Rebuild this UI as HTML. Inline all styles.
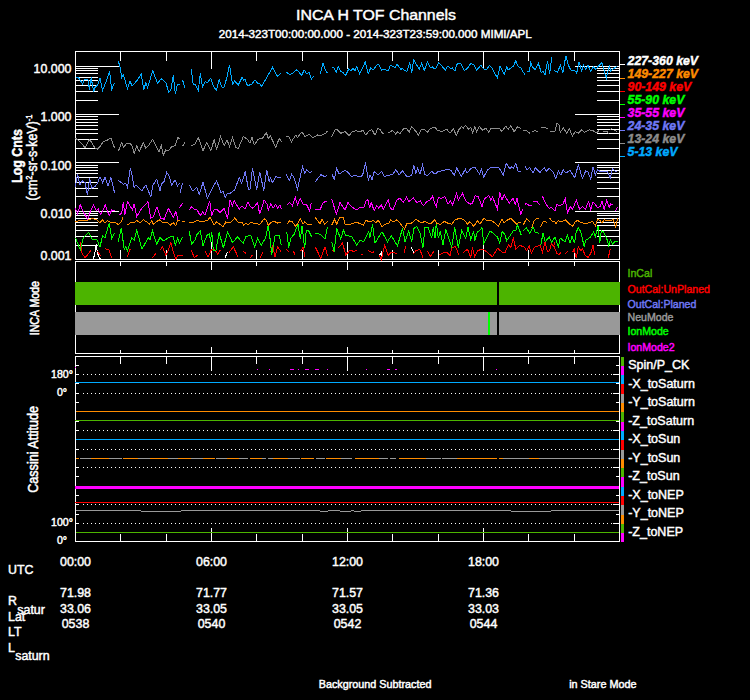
<!DOCTYPE html>
<html><head><meta charset="utf-8"><title>INCA H TOF Channels</title>
<style>html,body{margin:0;padding:0;background:#000;}svg{display:block}text{font-family:"Liberation Sans",Arial,Helvetica,sans-serif;fill:#fff;stroke:#fff;stroke-width:0.45px}</style></head><body>
<svg width="750" height="700" viewBox="0 0 750 700">
<rect x="0" y="0" width="750" height="700" fill="#000"/>
<g shape-rendering="crispEdges">
<rect x="75" y="51" width="545" height="1" fill="#fff"/>
<rect x="75" y="259" width="545" height="1" fill="#fff"/>
<rect x="75" y="51" width="1" height="209" fill="#fff"/>
<rect x="619" y="51" width="1" height="209" fill="#fff"/>
<rect x="75" y="66" width="44" height="1" fill="#fff"/>
<rect x="575" y="66" width="45" height="1" fill="#fff"/>
<rect x="75" y="51" width="23" height="1" fill="#fff"/>
<rect x="597" y="51" width="23" height="1" fill="#fff"/>
<rect x="75" y="114" width="44" height="1" fill="#fff"/>
<rect x="575" y="114" width="45" height="1" fill="#fff"/>
<rect x="75" y="100" width="23" height="1" fill="#fff"/>
<rect x="597" y="100" width="23" height="1" fill="#fff"/>
<rect x="75" y="91" width="23" height="1" fill="#fff"/>
<rect x="597" y="91" width="23" height="1" fill="#fff"/>
<rect x="75" y="85" width="23" height="1" fill="#fff"/>
<rect x="597" y="85" width="23" height="1" fill="#fff"/>
<rect x="75" y="80" width="23" height="1" fill="#fff"/>
<rect x="597" y="80" width="23" height="1" fill="#fff"/>
<rect x="75" y="77" width="23" height="1" fill="#fff"/>
<rect x="597" y="77" width="23" height="1" fill="#fff"/>
<rect x="75" y="73" width="23" height="1" fill="#fff"/>
<rect x="597" y="73" width="23" height="1" fill="#fff"/>
<rect x="75" y="70" width="23" height="1" fill="#fff"/>
<rect x="597" y="70" width="23" height="1" fill="#fff"/>
<rect x="75" y="68" width="23" height="1" fill="#fff"/>
<rect x="597" y="68" width="23" height="1" fill="#fff"/>
<rect x="75" y="162" width="44" height="1" fill="#fff"/>
<rect x="575" y="162" width="45" height="1" fill="#fff"/>
<rect x="75" y="148" width="23" height="1" fill="#fff"/>
<rect x="597" y="148" width="23" height="1" fill="#fff"/>
<rect x="75" y="139" width="23" height="1" fill="#fff"/>
<rect x="597" y="139" width="23" height="1" fill="#fff"/>
<rect x="75" y="133" width="23" height="1" fill="#fff"/>
<rect x="597" y="133" width="23" height="1" fill="#fff"/>
<rect x="75" y="129" width="23" height="1" fill="#fff"/>
<rect x="597" y="129" width="23" height="1" fill="#fff"/>
<rect x="75" y="125" width="23" height="1" fill="#fff"/>
<rect x="597" y="125" width="23" height="1" fill="#fff"/>
<rect x="75" y="122" width="23" height="1" fill="#fff"/>
<rect x="597" y="122" width="23" height="1" fill="#fff"/>
<rect x="75" y="119" width="23" height="1" fill="#fff"/>
<rect x="597" y="119" width="23" height="1" fill="#fff"/>
<rect x="75" y="116" width="23" height="1" fill="#fff"/>
<rect x="597" y="116" width="23" height="1" fill="#fff"/>
<rect x="75" y="211" width="44" height="1" fill="#fff"/>
<rect x="575" y="211" width="45" height="1" fill="#fff"/>
<rect x="75" y="196" width="23" height="1" fill="#fff"/>
<rect x="597" y="196" width="23" height="1" fill="#fff"/>
<rect x="75" y="188" width="23" height="1" fill="#fff"/>
<rect x="597" y="188" width="23" height="1" fill="#fff"/>
<rect x="75" y="182" width="23" height="1" fill="#fff"/>
<rect x="597" y="182" width="23" height="1" fill="#fff"/>
<rect x="75" y="177" width="23" height="1" fill="#fff"/>
<rect x="597" y="177" width="23" height="1" fill="#fff"/>
<rect x="75" y="173" width="23" height="1" fill="#fff"/>
<rect x="597" y="173" width="23" height="1" fill="#fff"/>
<rect x="75" y="170" width="23" height="1" fill="#fff"/>
<rect x="597" y="170" width="23" height="1" fill="#fff"/>
<rect x="75" y="167" width="23" height="1" fill="#fff"/>
<rect x="597" y="167" width="23" height="1" fill="#fff"/>
<rect x="75" y="165" width="23" height="1" fill="#fff"/>
<rect x="597" y="165" width="23" height="1" fill="#fff"/>
<rect x="75" y="245" width="23" height="1" fill="#fff"/>
<rect x="597" y="245" width="23" height="1" fill="#fff"/>
<rect x="75" y="236" width="23" height="1" fill="#fff"/>
<rect x="597" y="236" width="23" height="1" fill="#fff"/>
<rect x="75" y="230" width="23" height="1" fill="#fff"/>
<rect x="597" y="230" width="23" height="1" fill="#fff"/>
<rect x="75" y="225" width="23" height="1" fill="#fff"/>
<rect x="597" y="225" width="23" height="1" fill="#fff"/>
<rect x="75" y="222" width="23" height="1" fill="#fff"/>
<rect x="597" y="222" width="23" height="1" fill="#fff"/>
<rect x="75" y="218" width="23" height="1" fill="#fff"/>
<rect x="597" y="218" width="23" height="1" fill="#fff"/>
<rect x="75" y="215" width="23" height="1" fill="#fff"/>
<rect x="597" y="215" width="23" height="1" fill="#fff"/>
<rect x="75" y="213" width="23" height="1" fill="#fff"/>
<rect x="597" y="213" width="23" height="1" fill="#fff"/>
<rect x="120" y="51" width="1" height="10" fill="#fff"/>
<rect x="120" y="250" width="1" height="10" fill="#fff"/>
<rect x="166" y="51" width="1" height="10" fill="#fff"/>
<rect x="166" y="250" width="1" height="10" fill="#fff"/>
<rect x="211" y="51" width="1" height="18" fill="#fff"/>
<rect x="211" y="242" width="1" height="18" fill="#fff"/>
<rect x="256" y="51" width="1" height="10" fill="#fff"/>
<rect x="256" y="250" width="1" height="10" fill="#fff"/>
<rect x="302" y="51" width="1" height="10" fill="#fff"/>
<rect x="302" y="250" width="1" height="10" fill="#fff"/>
<rect x="347" y="51" width="1" height="18" fill="#fff"/>
<rect x="347" y="242" width="1" height="18" fill="#fff"/>
<rect x="392" y="51" width="1" height="10" fill="#fff"/>
<rect x="392" y="250" width="1" height="10" fill="#fff"/>
<rect x="438" y="51" width="1" height="10" fill="#fff"/>
<rect x="438" y="250" width="1" height="10" fill="#fff"/>
<rect x="483" y="51" width="1" height="18" fill="#fff"/>
<rect x="483" y="242" width="1" height="18" fill="#fff"/>
<rect x="528" y="51" width="1" height="10" fill="#fff"/>
<rect x="528" y="250" width="1" height="10" fill="#fff"/>
<rect x="574" y="51" width="1" height="10" fill="#fff"/>
<rect x="574" y="250" width="1" height="10" fill="#fff"/>
</g>
<g fill="none" stroke-width="1" shape-rendering="crispEdges" stroke-linejoin="miter">
<polyline points="93.3,259.4 95.0,252.5 96.3,244.2 97.5,253.3 99.2,257.5 100.8,259.4" stroke="#ffffff"/>
<polyline points="225.3,257.5 227.5,251.7" stroke="#ffffff"/>
<polyline points="379.2,255.8 381.3,252.5 382.0,259.4" stroke="#ffffff"/>
<polyline points="411.3,247.0 413.7,252.5" stroke="#ffffff"/>
<polyline points="80.3,242.0 82.0,253.3 85.0,257.5 87.5,255.0 91.3,249.7" stroke="#ff0000"/>
<polyline points="97.5,251.3 100.8,255.8" stroke="#ff0000"/>
<polyline points="105.3,248.7 109.2,250.0 111.7,258.3" stroke="#ff0000"/>
<polyline points="127.5,256.7 130.3,248.7" stroke="#ff0000"/>
<polyline points="152.5,258.0 155.8,253.3" stroke="#ff0000"/>
<polyline points="160.0,250.0 162.5,247.0 165.8,255.0 168.3,250.8 170.8,242.5 173.3,251.7 175.8,259.4 177.5,255.8 182.5,255.3" stroke="#ff0000"/>
<polyline points="191.3,250.0 194.2,257.5 197.5,255.3" stroke="#ff0000"/>
<polyline points="205.0,250.8 208.0,256.7 211.3,250.0 215.0,249.7 217.5,254.2 220.3,250.0" stroke="#ff0000"/>
<polyline points="229.2,252.5 233.3,246.7 238.3,257.5" stroke="#ff0000"/>
<polyline points="243.3,251.3 245.8,253.3" stroke="#ff0000"/>
<polyline points="250.0,258.3 252.5,254.7" stroke="#ff0000"/>
<polyline points="260.0,257.5 263.3,251.7" stroke="#ff0000"/>
<polyline points="270.8,252.5 272.5,245.0 275.0,256.7 277.5,246.7 280.8,251.3" stroke="#ff0000"/>
<polyline points="286.7,249.2 288.3,251.7" stroke="#ff0000"/>
<polyline points="293.3,250.8 295.3,255.3" stroke="#ff0000"/>
<polyline points="300.8,250.8 303.0,247.0 305.0,256.7" stroke="#ff0000"/>
<polyline points="315.3,247.0 320.8,258.3 325.0,246.7 327.5,255.8" stroke="#ff0000"/>
<polyline points="331.7,250.0 334.2,252.5" stroke="#ff0000"/>
<polyline points="338.3,248.0 342.5,243.0 345.8,255.0 350.0,250.0 354.2,251.7 356.7,250.0" stroke="#ff0000"/>
<polyline points="360.8,254.7 363.3,254.2" stroke="#ff0000"/>
<polyline points="368.3,250.8 372.5,252.5 374.2,251.7" stroke="#ff0000"/>
<polyline points="379.2,255.0 381.3,259.4 384.7,245.3 388.3,255.3 390.8,252.5 397.5,253.3" stroke="#ff0000"/>
<polyline points="404.2,252.5 405.8,245.8" stroke="#ff0000"/>
<polyline points="413.3,254.2 415.8,250.8 419.7,249.2 423.0,257.5" stroke="#ff0000"/>
<polyline points="427.5,251.3 430.3,256.7 434.2,250.8" stroke="#ff0000"/>
<polyline points="438.7,255.0 443.3,253.0 446.7,252.0 450.0,255.8 451.7,248.3 455.0,246.3 457.5,250.8 458.7,255.0" stroke="#ff0000"/>
<polyline points="463.3,252.5 467.5,249.2 470.8,257.5 472.5,247.5 474.7,256.7 477.5,250.8 481.7,249.2 484.2,250.0 487.5,252.5 492.5,256.7 497.5,248.3 502.0,252.0 505.0,252.5 508.3,245.0 510.8,247.5 513.3,237.5 515.8,249.2 520.0,245.3 524.7,247.5 526.7,250.8 529.2,245.8 531.3,253.3 534.2,247.5 540.0,245.0 542.5,252.5 545.0,242.5 547.5,251.7 549.7,250.8 551.3,243.3 553.3,246.7 555.0,242.5" stroke="#ff0000"/>
<polyline points="553.7,245.0 556.7,253.3 559.2,255.0 560.8,252.0" stroke="#ff0000"/>
<polyline points="565.3,254.2 567.5,251.3" stroke="#ff0000"/>
<polyline points="572.5,252.5 574.2,249.2 576.3,258.3 578.3,246.7 580.8,250.8 582.5,249.2 585.3,255.3 588.3,257.5 590.8,253.3 593.0,245.3 594.7,255.3" stroke="#ff0000"/>
<polyline points="608.3,257.5 610.3,249.2" stroke="#ff0000"/>
<polyline points="75.5,238.0 80.3,250.0 83.3,237.5 88.7,232.5 92.5,240.0 96.7,239.2 100.0,247.0 102.5,235.8 105.0,238.0 109.2,223.0 111.7,238.3 114.2,233.3" stroke="#00ff00"/>
<polyline points="118.3,241.7 121.3,228.0 124.2,249.2 125.8,246.7 127.5,250.8 131.7,237.5 134.2,240.0 136.7,230.0 142.0,249.2 148.3,237.5 150.0,240.0 152.5,230.8 156.7,244.2 160.0,237.5 163.3,240.8 170.0,237.0 173.3,236.7 175.3,245.0 177.5,238.3 179.5,243.3 182.5,236.7" stroke="#00ff00"/>
<polyline points="189.2,231.3 191.7,244.2 195.0,240.0 196.7,235.0 200.3,230.8 203.0,245.8 206.7,235.8 209.7,233.3 210.3,241.7 211.7,231.7 213.3,250.0 215.8,250.8 219.2,232.5 223.3,248.3 227.5,231.7 232.5,242.5 237.5,237.0 243.3,243.3 245.8,236.7 250.8,235.3 254.7,246.7 257.5,238.3 261.3,245.0 265.8,237.5 268.3,225.0 270.3,240.8 271.7,255.0 275.0,235.8 279.2,235.3 281.3,245.0" stroke="#00ff00"/>
<polyline points="286.7,231.7 288.7,247.5 290.8,238.3 294.2,234.2 298.0,224.2 300.3,239.2 302.0,225.8 304.7,248.3 306.3,230.0 308.7,230.8 311.7,237.0" stroke="#00ff00"/>
<polyline points="315.3,233.3 320.0,234.2 325.0,238.7 327.5,226.7" stroke="#00ff00"/>
<polyline points="331.7,241.7 334.2,251.7 336.7,228.3 340.8,239.2 343.3,230.0 345.8,235.3 351.7,236.7 356.7,245.0 360.0,240.3 363.7,241.7 368.7,231.3 370.0,237.5 372.5,224.2 375.0,243.3 382.0,231.7 387.5,241.7 391.3,235.8 397.5,245.8 402.5,228.3 405.0,241.7 408.7,231.3 411.7,241.7 414.2,227.5 416.7,226.7 420.0,233.3 423.0,247.5 425.0,227.5 428.3,227.5 431.7,238.3 433.3,227.5 435.0,238.3 436.3,222.5 438.3,238.3 440.3,230.8 443.0,245.0 445.8,229.2 451.7,247.5 454.7,227.5 458.3,247.5 461.7,230.8 465.8,238.3 468.0,227.5 470.8,239.7 473.7,231.3 474.7,240.8 477.5,231.7 480.0,230.3 482.0,227.5 483.7,243.3 490.0,230.8 494.2,234.2 497.5,237.0 499.7,243.3 502.0,231.7 504.7,234.2 506.7,240.8 510.0,235.8 513.3,230.8 516.3,230.0 517.5,224.2 521.3,235.3" stroke="#00ff00"/>
<polyline points="523.3,230.8 526.3,227.5 529.7,233.3 533.0,226.7 535.3,232.5 539.2,233.3" stroke="#00ff00"/>
<polyline points="540.8,245.0 543.0,233.3 545.3,241.7 549.2,237.0 551.7,242.5 555.0,236.7 558.3,246.7 560.3,238.0 565.0,242.0 567.5,235.0 570.0,243.0 572.0,236.3 574.7,243.3 575.8,233.3 578.3,227.5 580.8,231.7 584.2,246.7 585.8,240.3 590.0,237.5 593.7,232.0 595.3,236.7 598.0,225.8 599.7,243.3 601.3,230.8 603.3,231.7 606.7,238.3 608.7,245.8 610.3,240.0 612.5,244.2 615.0,241.7 617.5,241.3" stroke="#00ff00"/>
<polyline points="75.5,222.0 80.0,220.0 86.7,220.3 91.7,218.7 95.0,219.2 97.5,220.3 100.0,223.0 102.5,219.7 105.0,223.0 107.5,220.8 110.0,222.0 113.3,223.0 115.0,222.0 118.3,224.7 120.8,222.5 123.3,216.7" stroke="#ff8c00"/>
<polyline points="127.5,225.0 130.8,222.5 134.2,223.0 136.7,220.3 140.0,223.0 143.3,219.7 146.7,222.0 149.2,224.2 151.7,220.8 153.3,224.2 159.2,219.7 162.5,222.5 166.7,222.0 168.3,223.3 170.0,225.3 173.3,222.5 175.8,225.8 177.5,220.8 179.5,220.0" stroke="#ff8c00"/>
<polyline points="181.7,222.0 184.7,221.7" stroke="#ff8c00"/>
<polyline points="189.2,222.0 191.7,223.0 195.0,221.3 197.5,220.3 200.3,222.0 204.2,221.3 207.5,220.3 210.0,217.5 212.5,222.0 214.2,225.0 216.7,221.7 219.7,224.2 223.3,226.7 225.8,222.0 230.0,223.0 234.7,218.0 238.3,222.5 241.7,222.0 243.7,225.0 245.8,223.0 248.0,225.0 250.8,222.5 255.8,223.7 260.0,224.2 264.2,218.7 266.3,220.3 268.3,225.3 272.5,221.3 275.0,221.7 277.5,223.0 281.3,222.0" stroke="#ff8c00"/>
<polyline points="286.7,224.2 289.7,220.8 292.5,222.0 295.8,226.7 300.3,218.7 303.0,224.2 304.7,222.0 307.5,224.7 311.7,225.0" stroke="#ff8c00"/>
<polyline points="315.3,217.5 320.0,223.7 322.0,219.2 324.7,224.2 327.5,221.3" stroke="#ff8c00"/>
<polyline points="331.7,225.0 334.7,219.2 336.7,224.2 340.0,217.0 343.3,217.5 345.0,224.2 348.3,225.0 353.7,223.0 357.5,222.5 363.3,225.3 365.8,220.3 370.0,222.0 373.0,220.3 375.8,223.0 378.3,220.3 382.0,226.7 386.7,223.3 389.2,223.0 390.8,219.7 393.3,222.0 397.0,219.7 400.8,224.2 404.7,229.2 406.7,223.7 411.7,223.0 415.8,219.2 421.7,223.0 425.0,221.3 430.0,224.2 435.0,219.7 436.3,223.0 440.3,224.7 444.2,221.3 447.5,223.0 451.7,224.2 455.0,219.7 460.0,218.3 464.2,220.0 467.5,224.2 470.0,221.7 473.7,226.3 477.5,220.8 480.0,224.2 483.7,218.3 487.5,220.8 490.8,220.0 494.2,222.5 498.3,226.3 502.0,218.7 504.2,223.0 507.0,220.3 510.8,218.3 516.7,224.2 519.2,222.0 521.3,222.5" stroke="#ff8c00"/>
<polyline points="523.3,225.0 526.7,218.3 528.3,220.3 529.7,221.3" stroke="#ff8c00"/>
<polyline points="531.7,228.3 534.2,220.8 536.7,218.3 539.2,218.0" stroke="#ff8c00"/>
<polyline points="540.8,226.7 543.3,221.3 547.5,222.5" stroke="#ff8c00"/>
<polyline points="549.7,218.3 552.5,221.3 555.0,222.0 555.8,223.7 558.3,220.8 562.0,221.7 565.3,219.7 568.3,223.0 572.5,226.3 575.0,222.0 577.5,220.3 580.8,222.5 585.0,223.7 590.0,222.5 592.5,221.3 595.3,225.8 597.5,219.7 600.0,220.3 602.0,223.3 604.2,219.7 607.5,220.8 611.7,220.0 613.3,219.7 615.8,227.0 617.5,218.3" stroke="#ff8c00"/>
<polyline points="75.5,208.3 77.5,213.3 80.3,204.7 82.5,210.0 87.5,219.2 89.7,213.3 93.3,205.0 96.3,210.8 98.3,209.2 100.8,214.2 105.3,205.0 109.2,215.8 111.7,210.0 114.7,210.8" stroke="#ff00ff"/>
<polyline points="119.2,214.7 121.7,213.3 123.3,201.7 124.7,215.0 127.5,201.7 132.5,210.0 134.2,203.7 136.7,216.7 141.7,208.3 148.0,201.7 150.8,218.3 153.3,216.7 157.0,206.7 160.8,218.3 164.2,219.2 168.3,208.3 173.3,217.5 175.8,211.7 178.0,220.0" stroke="#ff00ff"/>
<polyline points="179.2,208.3 182.5,203.0" stroke="#ff00ff"/>
<polyline points="189.2,210.0 191.7,206.7 195.0,210.0 196.7,209.2 200.3,215.8 202.5,212.0 205.0,215.0 209.7,200.8 211.7,215.8 214.2,209.2 217.5,210.0 220.0,212.5 224.2,208.3 227.5,218.7 230.0,200.0 232.5,205.8 234.2,200.8 239.2,209.2 242.0,205.8 245.0,209.2 248.0,201.7 250.3,206.7 253.0,208.3 257.5,202.5 259.7,214.2 264.2,200.0 267.0,204.2 268.3,210.0 270.8,203.7 273.0,208.3 275.8,204.2 277.5,208.3 280.0,204.7 281.3,209.2" stroke="#ff00ff"/>
<polyline points="286.7,205.0 289.7,202.5 292.5,205.8 295.3,197.5 297.5,205.0 300.3,198.3 303.3,205.0 306.3,204.2 309.7,210.8 311.3,202.5" stroke="#ff00ff"/>
<polyline points="315.3,209.2 320.3,209.2 323.3,202.5 327.5,200.8" stroke="#ff00ff"/>
<polyline points="331.7,198.7 336.3,214.2 340.0,202.5 345.0,210.0 348.0,202.5 351.7,207.0 356.7,210.0 359.7,207.5 363.7,208.0 365.8,201.3 368.0,199.7 369.7,208.3 371.3,202.5 374.2,210.8 376.7,205.3 378.7,208.3 381.3,205.0 383.3,209.2 388.3,200.0 390.3,208.3 393.0,210.0 397.0,199.7 400.0,198.3 403.3,202.5 406.7,197.0 408.7,201.7 413.3,198.0 416.7,202.5 420.3,200.8 423.3,205.8 426.7,201.7 430.3,200.0 432.5,195.8 435.0,204.2 436.3,206.7 438.3,197.5 441.7,198.3 445.0,196.7 448.0,204.2 450.3,200.8 452.5,205.0 456.7,193.3 458.3,200.0 462.5,193.3 465.8,200.8 470.0,204.2 472.5,203.0 475.0,195.8 478.3,196.7 482.0,206.7 484.2,199.2 488.7,195.3 490.8,200.0 492.5,196.7 497.5,209.2 499.7,192.5 502.0,200.0 504.2,194.7 509.2,203.3 513.0,198.0 515.3,204.2 517.0,198.3 520.8,214.2 522.5,209.2" stroke="#ff00ff"/>
<polyline points="524.7,204.2 526.7,203.7 529.7,205.8 531.7,205.0" stroke="#ff00ff"/>
<polyline points="533.3,201.7 536.7,201.3 540.0,205.0" stroke="#ff00ff"/>
<polyline points="542.5,196.3 545.8,203.7 549.2,208.3 551.7,207.5 555.0,210.8 556.7,204.7 559.2,205.3 562.5,204.7 565.3,198.7 567.5,213.7 570.0,206.7 572.5,209.2 576.3,200.3 579.7,209.2 582.5,206.3 585.3,209.2 588.7,201.7 590.8,210.0 593.0,201.7 597.5,207.5 600.0,206.7 602.0,200.8 604.2,209.2 606.7,200.3 609.2,207.5 610.8,203.7 613.0,205.0" stroke="#ff00ff"/>
<polyline points="615.3,211.3 617.5,207.0" stroke="#ff00ff"/>
<polyline points="75.5,186.7 77.5,174.2 80.0,185.0 82.5,180.8 85.0,182.5 87.5,195.0 89.7,178.3 91.7,188.3 95.0,186.7 97.5,183.3 100.0,176.7 102.5,182.5 105.0,177.5 108.0,185.8 110.8,177.5 114.7,193.3" stroke="#6f78f5"/>
<polyline points="118.3,180.3 123.3,184.2 125.8,183.3 127.5,187.5 130.3,168.3 132.0,175.0 134.2,187.5 135.8,185.0 141.7,190.8 145.8,185.0 150.8,196.7 153.0,185.0 156.7,179.2 160.0,190.8 161.7,183.3 163.7,182.5 166.7,172.5 168.7,175.0 171.7,185.0 175.0,180.0 177.5,185.8 179.5,183.3" stroke="#6f78f5"/>
<polyline points="180.0,193.3 182.5,183.3" stroke="#6f78f5"/>
<polyline points="189.2,184.7 192.5,190.8 195.0,189.2 196.7,187.5 199.2,194.2 203.0,182.5 207.5,198.3 211.7,189.2 216.7,180.8 220.8,192.5 223.3,191.7 225.3,197.5 227.5,193.3 230.0,193.3 234.7,190.0 239.2,177.5 241.7,183.3 245.3,171.3 248.3,189.2 250.0,189.2 252.5,168.3 256.7,189.7 259.7,171.7 263.8,190.8 266.7,170.0 269.2,181.7 270.3,177.5 272.5,182.5 275.8,176.7 279.2,178.0 281.3,176.7" stroke="#6f78f5"/>
<polyline points="286.3,174.2 289.2,180.8 291.7,174.2 294.2,178.3 297.5,189.2 302.5,166.7 304.7,173.3 306.7,170.0 309.7,173.0 311.7,171.3" stroke="#6f78f5"/>
<polyline points="315.3,181.7 320.8,174.7 324.2,176.3 327.5,175.8" stroke="#6f78f5"/>
<polyline points="331.7,173.7 334.2,179.2 336.7,168.3 338.7,173.3 340.8,173.0 345.0,170.3 348.3,172.5 351.3,176.7 355.8,175.0 358.3,176.7 362.5,175.8 365.5,162.5 368.3,179.7 370.0,175.0 372.0,179.7 374.2,171.7 378.3,175.0 381.7,171.3 384.2,176.7 388.3,175.3 392.5,174.7 395.8,169.7 399.2,174.7 402.5,170.8 406.7,176.3 411.7,175.8 413.7,165.0 415.8,173.3 417.5,168.3 420.0,174.2 422.5,165.0 425.0,174.7 427.5,175.3 431.7,171.3 435.0,174.2 437.5,172.0 441.7,170.8 447.5,169.2 450.8,170.3 454.2,175.0 456.7,168.0 461.3,176.7 465.3,169.2 467.0,173.3 470.8,168.7 474.7,167.0 479.7,174.2 481.3,168.7 483.7,177.0 487.5,170.0 490.8,167.5 495.0,168.0 498.7,167.5 503.3,175.0 506.3,163.3 509.7,168.7 511.7,166.7 513.3,168.3 515.8,163.3 518.3,172.0 521.3,171.7" stroke="#6f78f5"/>
<polyline points="525.0,165.8 527.0,170.0 529.7,167.5 533.0,173.0 535.3,168.0 540.0,172.5 544.2,167.5 546.3,171.3 549.2,168.0 553.3,172.0 555.0,176.7 555.8,178.3 558.3,170.8 560.8,175.0 563.3,170.0 566.3,173.0 570.0,170.3 574.7,177.5 578.3,165.0 582.5,178.3 585.8,170.8 588.0,172.0 590.8,179.2 593.0,166.7 595.3,175.0 597.5,170.0 600.0,171.3 607.5,172.0 610.3,178.0 612.5,168.3 615.0,170.8 617.5,172.5" stroke="#6f78f5"/>
<polyline points="75.5,138.3 80.0,141.7 85.0,147.5 89.7,139.2 95.0,148.3 97.5,149.2 100.0,146.7 103.3,141.7 107.5,140.0 110.8,138.0 114.7,148.3" stroke="#8c8c8c"/>
<polyline points="118.3,151.3 121.7,142.5 123.7,147.5 126.7,143.3 130.0,143.0 132.5,146.7 134.2,153.3 136.7,145.8 139.2,151.7 143.3,142.5 145.8,148.3 148.3,145.8 152.8,139.2 156.7,147.5 159.2,151.7 161.3,145.8 163.3,155.0 165.8,150.0 168.3,150.8 171.7,146.7 175.0,145.8 178.0,136.7 179.5,139.2" stroke="#8c8c8c"/>
<polyline points="182.5,146.3 184.7,142.5" stroke="#8c8c8c"/>
<polyline points="191.3,145.8 195.0,144.2 198.3,137.5 203.0,150.8 206.7,142.5 210.8,150.3 214.2,140.0 216.7,149.2 220.5,136.7 224.2,145.8 227.0,140.0 229.5,146.3 232.5,137.5 235.8,147.5 238.3,148.3 243.3,136.7 247.5,139.2 250.0,143.3 252.0,137.5 254.2,145.0 258.3,139.2 262.5,138.3 266.3,132.5 268.3,138.3 270.3,135.8 275.8,147.5 279.2,138.3 281.3,141.7" stroke="#8c8c8c"/>
<polyline points="286.3,136.7 289.2,137.0 291.3,142.0 295.8,135.0 297.5,137.5 302.0,131.7 305.0,136.7 309.2,134.2 312.5,137.5 315.0,136.7 317.5,135.0 321.7,135.3 325.8,133.3 327.5,130.8" stroke="#8c8c8c"/>
<polyline points="331.7,137.0 335.0,129.7 337.5,130.0 340.8,133.3 345.0,131.7 349.2,135.8 351.7,132.0 355.8,130.8 360.0,131.7 363.0,130.3 365.8,135.0 369.2,130.8 372.0,129.7 375.0,135.3 377.5,128.7 380.0,129.2 382.5,133.3 384.5,134.2" stroke="#8c8c8c"/>
<polyline points="388.3,133.0 392.5,130.3 395.8,134.2 397.5,132.0 400.0,133.7 404.2,128.0 406.7,128.7 409.2,132.0 411.7,126.7 415.8,131.3 418.3,135.0 421.7,129.2 425.0,130.0 427.5,132.0 430.8,128.3 435.0,127.5 437.5,130.3 441.7,131.7 446.7,129.2 450.0,133.3 453.3,128.7 456.3,135.3 458.7,130.0 461.7,126.3 463.3,128.3 465.3,125.3 468.7,129.2 470.8,127.0 472.5,133.0 474.7,126.7 476.7,132.0 479.2,126.3 482.5,130.0 485.8,128.3 488.7,132.0 490.8,128.3 495.8,128.7 499.2,128.0 501.7,131.3 505.8,126.3 508.3,129.2 510.8,125.8 514.2,131.7 517.5,126.7 520.8,128.3" stroke="#8c8c8c"/>
<polyline points="522.5,130.8 526.7,130.8 529.7,133.3" stroke="#8c8c8c"/>
<polyline points="531.7,131.3 535.0,130.8 538.3,131.7" stroke="#8c8c8c"/>
<polyline points="540.8,127.5 545.0,127.5 547.5,128.7" stroke="#8c8c8c"/>
<polyline points="550.0,131.3 555.0,131.3 557.0,123.0 559.2,125.0 560.3,132.5 563.3,127.5 566.7,133.3 569.2,128.3 572.5,136.3 575.0,131.7 578.3,133.3 581.7,129.7 584.2,132.5 589.2,129.7 593.3,130.8 596.7,133.0 599.2,130.3" stroke="#8c8c8c"/>
<polyline points="603.3,131.7 607.5,132.0 608.7,134.2" stroke="#8c8c8c"/>
<polyline points="610.0,129.2 612.5,128.7" stroke="#8c8c8c"/>
<polyline points="614.2,130.8 617.5,131.3" stroke="#8c8c8c"/>
<polyline points="75.5,76.7 79.2,78.3 82.5,84.2 84.2,79.7 86.7,79.2 88.0,80.0 89.5,90.0 90.3,81.7 91.3,77.5 92.5,85.8 93.8,91.3 95.0,87.5 97.5,85.0 100.0,78.3 102.5,90.3 105.8,82.5 109.5,71.3 111.7,89.2 114.2,83.3" stroke="#00aaff"/>
<polyline points="118.3,61.3 120.0,66.7 121.7,77.5 123.3,75.0 127.5,88.3 130.0,80.8 132.0,86.3 136.7,80.8 141.3,74.2 143.8,90.0 145.8,82.5 147.5,87.5 152.8,70.8 157.5,83.3 161.3,78.7 165.8,82.5 168.7,92.0 170.8,90.0 173.3,75.0 175.3,94.2 177.5,84.2 179.5,84.2" stroke="#00aaff"/>
<polyline points="182.5,79.7 184.7,87.5" stroke="#00aaff"/>
<polyline points="191.3,69.2 193.3,85.0 195.0,84.2 198.3,90.8 200.3,73.3 202.5,86.7 205.0,81.7 207.5,82.5 210.8,78.3 213.3,85.8 216.3,90.3 219.2,79.7 221.7,86.7 223.7,88.0 226.7,78.3 229.5,64.7 232.5,84.2 234.7,80.8 238.3,85.0 242.0,77.5 243.7,80.0 245.3,79.7 247.5,85.8 251.7,84.2 255.0,79.7 257.5,83.3 259.2,83.0 261.7,86.3 272.5,67.5 277.5,76.3 281.3,73.0" stroke="#00aaff"/>
<polyline points="286.3,72.0 289.7,74.7 292.0,73.7 296.7,69.7 301.7,75.3 304.2,70.0 306.7,73.7 309.2,72.5 311.3,79.2 313.7,75.8" stroke="#00aaff"/>
<polyline points="320.3,74.2 323.0,63.3 325.8,70.8 327.5,73.3" stroke="#00aaff"/>
<polyline points="331.7,67.0 334.2,68.0 336.3,72.5 338.3,66.7 340.8,71.7 343.3,72.5 345.3,75.8 348.7,69.2 350.8,70.8 353.0,68.3 355.0,70.8 356.7,66.7 359.7,73.7 363.0,66.7 365.3,62.0 368.3,73.7 370.8,67.5 373.0,70.0 376.7,65.3 378.7,64.2 381.7,70.0 384.2,69.2 388.3,70.8 390.3,65.3 393.0,66.3 395.0,68.3 397.0,64.2 400.8,69.2 402.5,68.7 406.7,71.7 409.7,63.0 411.7,72.5 413.7,60.0 416.7,65.0 419.2,69.2 421.7,63.3 424.2,70.8 427.5,62.0 430.3,67.5 432.5,67.0 435.0,69.2 435.8,68.7 438.7,62.5 442.5,66.7 445.3,70.3 447.5,66.3 450.8,68.3 452.5,68.0 455.0,71.3 456.7,64.2 460.8,63.3 464.2,70.8 467.5,68.3 470.8,63.3 474.2,65.3 476.7,70.0 480.8,65.3 484.2,69.2 486.7,69.7 489.2,65.3 491.7,67.5 494.2,72.5 497.5,78.0 500.0,65.8 504.2,74.7 506.7,67.0 508.3,70.0 513.3,66.3 515.8,60.8 517.5,65.8 520.8,68.0 525.0,75.0" stroke="#00aaff"/>
<polyline points="526.7,70.8 529.2,71.7 530.8,62.5 532.5,67.0 535.0,69.7 538.3,63.3 541.3,72.5 543.0,70.8 545.0,75.0 547.5,60.8 549.7,73.7 551.7,57.5" stroke="#00aaff"/>
<polyline points="554.2,70.0 555.0,70.8 557.5,72.5 560.3,65.0 563.0,72.5 565.8,55.8 568.3,65.0 570.8,70.0 575.0,70.8 576.7,73.0 579.2,61.7 581.7,71.7 583.3,65.0 585.8,69.2 588.0,65.3 590.8,71.7 593.3,66.7 595.8,69.2 601.7,62.5 606.3,78.3 609.2,65.8 610.8,70.8 614.2,68.3 616.7,66.7" stroke="#00aaff"/>
</g>
<text x="71.5" y="72.9" font-size="12.4" text-anchor="end">10.000</text>
<text x="71.5" y="121.2" font-size="12.4" text-anchor="end">1.000</text>
<text x="71.5" y="169.6" font-size="12.4" text-anchor="end">0.100</text>
<text x="71.5" y="217.9" font-size="12.4" text-anchor="end">0.010</text>
<text x="71.5" y="259.6" font-size="12.4" text-anchor="end">0.001</text>
<g shape-rendering="crispEdges">
<rect x="620" y="64" width="5" height="1" fill="#ffffff"/>
<rect x="620" y="78" width="5" height="1" fill="#ff8c00"/>
<rect x="620" y="91" width="5" height="1" fill="#ff0000"/>
<rect x="620" y="104" width="5" height="1" fill="#00ff00"/>
<rect x="620" y="117" width="5" height="1" fill="#ff00ff"/>
<rect x="620" y="130" width="5" height="1" fill="#6f78f5"/>
<rect x="620" y="143" width="5" height="1" fill="#8c8c8c"/>
<rect x="620" y="156" width="5" height="1" fill="#00aaff"/>
</g>
<text x="627.6" y="64.6" font-size="12.3" font-weight="bold" font-style="italic" style="fill:#ffffff;stroke:#ffffff">227-360 keV</text>
<text x="627.6" y="77.7" font-size="12.3" font-weight="bold" font-style="italic" style="fill:#ff8c00;stroke:#ff8c00">149-227 keV</text>
<text x="627.6" y="90.7" font-size="12.3" font-weight="bold" font-style="italic" style="fill:#ff0000;stroke:#ff0000">90-149 keV</text>
<text x="627.6" y="103.8" font-size="12.3" font-weight="bold" font-style="italic" style="fill:#00ff00;stroke:#00ff00">55-90 keV</text>
<text x="627.6" y="116.9" font-size="12.3" font-weight="bold" font-style="italic" style="fill:#ff00ff;stroke:#ff00ff">35-55 keV</text>
<text x="627.6" y="129.9" font-size="12.3" font-weight="bold" font-style="italic" style="fill:#6f78f5;stroke:#6f78f5">24-35 keV</text>
<text x="627.6" y="143.0" font-size="12.3" font-weight="bold" font-style="italic" style="fill:#8c8c8c;stroke:#8c8c8c">13-24 keV</text>
<text x="627.6" y="156.1" font-size="12.3" font-weight="bold" font-style="italic" style="fill:#00aaff;stroke:#00aaff">5-13 keV</text>
<g shape-rendering="crispEdges">
<rect x="75" y="261" width="545" height="1" fill="#fff"/>
<rect x="75" y="353" width="545" height="1" fill="#fff"/>
<rect x="75" y="261" width="1" height="93" fill="#fff"/>
<rect x="619" y="261" width="1" height="93" fill="#fff"/>
<rect x="120" y="261" width="1" height="5" fill="#fff"/>
<rect x="120" y="350" width="1" height="4" fill="#fff"/>
<rect x="166" y="261" width="1" height="5" fill="#fff"/>
<rect x="166" y="350" width="1" height="4" fill="#fff"/>
<rect x="211" y="261" width="1" height="9" fill="#fff"/>
<rect x="211" y="347" width="1" height="7" fill="#fff"/>
<rect x="256" y="261" width="1" height="5" fill="#fff"/>
<rect x="256" y="350" width="1" height="4" fill="#fff"/>
<rect x="302" y="261" width="1" height="5" fill="#fff"/>
<rect x="302" y="350" width="1" height="4" fill="#fff"/>
<rect x="347" y="261" width="1" height="9" fill="#fff"/>
<rect x="347" y="347" width="1" height="7" fill="#fff"/>
<rect x="392" y="261" width="1" height="5" fill="#fff"/>
<rect x="392" y="350" width="1" height="4" fill="#fff"/>
<rect x="438" y="261" width="1" height="5" fill="#fff"/>
<rect x="438" y="350" width="1" height="4" fill="#fff"/>
<rect x="483" y="261" width="1" height="9" fill="#fff"/>
<rect x="483" y="347" width="1" height="7" fill="#fff"/>
<rect x="528" y="261" width="1" height="5" fill="#fff"/>
<rect x="528" y="350" width="1" height="4" fill="#fff"/>
<rect x="574" y="261" width="1" height="5" fill="#fff"/>
<rect x="574" y="350" width="1" height="4" fill="#fff"/>
<rect x="75" y="282" width="545" height="23" fill="#4cb400"/>
<rect x="75" y="312" width="545" height="23" fill="#999999"/>
<rect x="497" y="282" width="2" height="23" fill="#000"/>
<rect x="497" y="312" width="2" height="23" fill="#000"/>
<rect x="488" y="312" width="2" height="23" fill="#00ff00"/>
</g>
<text x="627.5" y="277.4" font-size="10.6" style="fill:#4cb400;stroke:#4cb400">InCal</text>
<text x="627.5" y="292.6" font-size="10.6" style="fill:#ff0000;stroke:#ff0000">OutCal:UnPlaned</text>
<text x="627.5" y="308" font-size="10.6" style="fill:#6f78f5;stroke:#6f78f5">OutCal:Planed</text>
<text x="627.5" y="320.6" font-size="10.6" style="fill:#999999;stroke:#999999">NeuMode</text>
<text x="627.5" y="335.4" font-size="10.6" style="fill:#00ff00;stroke:#00ff00">IonMode</text>
<text x="627.5" y="350.6" font-size="10.6" style="fill:#ff00ff;stroke:#ff00ff">IonMode2</text>
<g shape-rendering="crispEdges">
<rect x="75" y="356" width="545" height="1" fill="#fff"/>
<rect x="75" y="541" width="545" height="1" fill="#fff"/>
<rect x="75" y="356" width="1" height="186" fill="#fff"/>
<rect x="619" y="356" width="1" height="186" fill="#fff"/>
<rect x="120" y="356" width="1" height="8" fill="#fff"/>
<rect x="120" y="534" width="1" height="8" fill="#fff"/>
<rect x="166" y="356" width="1" height="8" fill="#fff"/>
<rect x="166" y="534" width="1" height="8" fill="#fff"/>
<rect x="211" y="356" width="1" height="15" fill="#fff"/>
<rect x="211" y="528" width="1" height="14" fill="#fff"/>
<rect x="256" y="356" width="1" height="8" fill="#fff"/>
<rect x="256" y="534" width="1" height="8" fill="#fff"/>
<rect x="302" y="356" width="1" height="8" fill="#fff"/>
<rect x="302" y="534" width="1" height="8" fill="#fff"/>
<rect x="347" y="356" width="1" height="15" fill="#fff"/>
<rect x="347" y="528" width="1" height="14" fill="#fff"/>
<rect x="392" y="356" width="1" height="8" fill="#fff"/>
<rect x="392" y="534" width="1" height="8" fill="#fff"/>
<rect x="438" y="356" width="1" height="8" fill="#fff"/>
<rect x="438" y="534" width="1" height="8" fill="#fff"/>
<rect x="483" y="356" width="1" height="15" fill="#fff"/>
<rect x="483" y="528" width="1" height="14" fill="#fff"/>
<rect x="528" y="356" width="1" height="8" fill="#fff"/>
<rect x="528" y="534" width="1" height="8" fill="#fff"/>
<rect x="574" y="356" width="1" height="8" fill="#fff"/>
<rect x="574" y="534" width="1" height="8" fill="#fff"/>
<rect x="75" y="365" width="4" height="1" fill="#fff"/>
<rect x="616" y="365" width="4" height="1" fill="#fff"/>
<rect x="75" y="374" width="4" height="1" fill="#fff"/>
<rect x="613" y="374" width="7" height="1" fill="#fff"/>
<path d="M83 374h1v1h-1zM87 374h1v1h-1zM91 374h1v1h-1zM95 374h1v1h-1zM99 374h1v1h-1zM103 374h1v1h-1zM107 374h1v1h-1zM111 374h1v1h-1zM115 374h1v1h-1zM119 374h1v1h-1zM123 374h1v1h-1zM127 374h1v1h-1zM131 374h1v1h-1zM135 374h1v1h-1zM139 374h1v1h-1zM143 374h1v1h-1zM147 374h1v1h-1zM151 374h1v1h-1zM155 374h1v1h-1zM159 374h1v1h-1zM163 374h1v1h-1zM167 374h1v1h-1zM171 374h1v1h-1zM175 374h1v1h-1zM179 374h1v1h-1zM183 374h1v1h-1zM187 374h1v1h-1zM191 374h1v1h-1zM195 374h1v1h-1zM199 374h1v1h-1zM203 374h1v1h-1zM207 374h1v1h-1zM211 374h1v1h-1zM215 374h1v1h-1zM219 374h1v1h-1zM223 374h1v1h-1zM227 374h1v1h-1zM231 374h1v1h-1zM235 374h1v1h-1zM239 374h1v1h-1zM243 374h1v1h-1zM247 374h1v1h-1zM251 374h1v1h-1zM255 374h1v1h-1zM259 374h1v1h-1zM263 374h1v1h-1zM267 374h1v1h-1zM271 374h1v1h-1zM275 374h1v1h-1zM279 374h1v1h-1zM283 374h1v1h-1zM287 374h1v1h-1zM291 374h1v1h-1zM295 374h1v1h-1zM299 374h1v1h-1zM303 374h1v1h-1zM307 374h1v1h-1zM311 374h1v1h-1zM315 374h1v1h-1zM319 374h1v1h-1zM323 374h1v1h-1zM327 374h1v1h-1zM331 374h1v1h-1zM335 374h1v1h-1zM339 374h1v1h-1zM343 374h1v1h-1zM347 374h1v1h-1zM351 374h1v1h-1zM355 374h1v1h-1zM359 374h1v1h-1zM363 374h1v1h-1zM367 374h1v1h-1zM371 374h1v1h-1zM375 374h1v1h-1zM379 374h1v1h-1zM383 374h1v1h-1zM387 374h1v1h-1zM391 374h1v1h-1zM395 374h1v1h-1zM399 374h1v1h-1zM403 374h1v1h-1zM407 374h1v1h-1zM411 374h1v1h-1zM415 374h1v1h-1zM419 374h1v1h-1zM423 374h1v1h-1zM427 374h1v1h-1zM431 374h1v1h-1zM435 374h1v1h-1zM439 374h1v1h-1zM443 374h1v1h-1zM447 374h1v1h-1zM451 374h1v1h-1zM455 374h1v1h-1zM459 374h1v1h-1zM463 374h1v1h-1zM467 374h1v1h-1zM471 374h1v1h-1zM475 374h1v1h-1zM479 374h1v1h-1zM483 374h1v1h-1zM487 374h1v1h-1zM491 374h1v1h-1zM495 374h1v1h-1zM499 374h1v1h-1zM503 374h1v1h-1zM507 374h1v1h-1zM511 374h1v1h-1zM515 374h1v1h-1zM519 374h1v1h-1zM523 374h1v1h-1zM527 374h1v1h-1zM531 374h1v1h-1zM535 374h1v1h-1zM539 374h1v1h-1zM543 374h1v1h-1zM547 374h1v1h-1zM551 374h1v1h-1zM555 374h1v1h-1zM559 374h1v1h-1zM563 374h1v1h-1zM567 374h1v1h-1zM571 374h1v1h-1zM575 374h1v1h-1zM579 374h1v1h-1zM583 374h1v1h-1zM587 374h1v1h-1zM591 374h1v1h-1zM595 374h1v1h-1zM599 374h1v1h-1zM603 374h1v1h-1zM607 374h1v1h-1zM611 374h1v1h-1z" fill="#fff"/>
<rect x="75" y="383" width="4" height="1" fill="#fff"/>
<rect x="616" y="383" width="4" height="1" fill="#fff"/>
<rect x="75" y="393" width="4" height="1" fill="#fff"/>
<rect x="613" y="393" width="7" height="1" fill="#fff"/>
<path d="M83 393h1v1h-1zM87 393h1v1h-1zM91 393h1v1h-1zM95 393h1v1h-1zM99 393h1v1h-1zM103 393h1v1h-1zM107 393h1v1h-1zM111 393h1v1h-1zM115 393h1v1h-1zM119 393h1v1h-1zM123 393h1v1h-1zM127 393h1v1h-1zM131 393h1v1h-1zM135 393h1v1h-1zM139 393h1v1h-1zM143 393h1v1h-1zM147 393h1v1h-1zM151 393h1v1h-1zM155 393h1v1h-1zM159 393h1v1h-1zM163 393h1v1h-1zM167 393h1v1h-1zM171 393h1v1h-1zM175 393h1v1h-1zM179 393h1v1h-1zM183 393h1v1h-1zM187 393h1v1h-1zM191 393h1v1h-1zM195 393h1v1h-1zM199 393h1v1h-1zM203 393h1v1h-1zM207 393h1v1h-1zM211 393h1v1h-1zM215 393h1v1h-1zM219 393h1v1h-1zM223 393h1v1h-1zM227 393h1v1h-1zM231 393h1v1h-1zM235 393h1v1h-1zM239 393h1v1h-1zM243 393h1v1h-1zM247 393h1v1h-1zM251 393h1v1h-1zM255 393h1v1h-1zM259 393h1v1h-1zM263 393h1v1h-1zM267 393h1v1h-1zM271 393h1v1h-1zM275 393h1v1h-1zM279 393h1v1h-1zM283 393h1v1h-1zM287 393h1v1h-1zM291 393h1v1h-1zM295 393h1v1h-1zM299 393h1v1h-1zM303 393h1v1h-1zM307 393h1v1h-1zM311 393h1v1h-1zM315 393h1v1h-1zM319 393h1v1h-1zM323 393h1v1h-1zM327 393h1v1h-1zM331 393h1v1h-1zM335 393h1v1h-1zM339 393h1v1h-1zM343 393h1v1h-1zM347 393h1v1h-1zM351 393h1v1h-1zM355 393h1v1h-1zM359 393h1v1h-1zM363 393h1v1h-1zM367 393h1v1h-1zM371 393h1v1h-1zM375 393h1v1h-1zM379 393h1v1h-1zM383 393h1v1h-1zM387 393h1v1h-1zM391 393h1v1h-1zM395 393h1v1h-1zM399 393h1v1h-1zM403 393h1v1h-1zM407 393h1v1h-1zM411 393h1v1h-1zM415 393h1v1h-1zM419 393h1v1h-1zM423 393h1v1h-1zM427 393h1v1h-1zM431 393h1v1h-1zM435 393h1v1h-1zM439 393h1v1h-1zM443 393h1v1h-1zM447 393h1v1h-1zM451 393h1v1h-1zM455 393h1v1h-1zM459 393h1v1h-1zM463 393h1v1h-1zM467 393h1v1h-1zM471 393h1v1h-1zM475 393h1v1h-1zM479 393h1v1h-1zM483 393h1v1h-1zM487 393h1v1h-1zM491 393h1v1h-1zM495 393h1v1h-1zM499 393h1v1h-1zM503 393h1v1h-1zM507 393h1v1h-1zM511 393h1v1h-1zM515 393h1v1h-1zM519 393h1v1h-1zM523 393h1v1h-1zM527 393h1v1h-1zM531 393h1v1h-1zM535 393h1v1h-1zM539 393h1v1h-1zM543 393h1v1h-1zM547 393h1v1h-1zM551 393h1v1h-1zM555 393h1v1h-1zM559 393h1v1h-1zM563 393h1v1h-1zM567 393h1v1h-1zM571 393h1v1h-1zM575 393h1v1h-1zM579 393h1v1h-1zM583 393h1v1h-1zM587 393h1v1h-1zM591 393h1v1h-1zM595 393h1v1h-1zM599 393h1v1h-1zM603 393h1v1h-1zM607 393h1v1h-1zM611 393h1v1h-1z" fill="#fff"/>
<rect x="75" y="402" width="4" height="1" fill="#fff"/>
<rect x="616" y="402" width="4" height="1" fill="#fff"/>
<rect x="75" y="411" width="4" height="1" fill="#fff"/>
<rect x="613" y="411" width="7" height="1" fill="#fff"/>
<path d="M83 411h1v1h-1zM87 411h1v1h-1zM91 411h1v1h-1zM95 411h1v1h-1zM99 411h1v1h-1zM103 411h1v1h-1zM107 411h1v1h-1zM111 411h1v1h-1zM115 411h1v1h-1zM119 411h1v1h-1zM123 411h1v1h-1zM127 411h1v1h-1zM131 411h1v1h-1zM135 411h1v1h-1zM139 411h1v1h-1zM143 411h1v1h-1zM147 411h1v1h-1zM151 411h1v1h-1zM155 411h1v1h-1zM159 411h1v1h-1zM163 411h1v1h-1zM167 411h1v1h-1zM171 411h1v1h-1zM175 411h1v1h-1zM179 411h1v1h-1zM183 411h1v1h-1zM187 411h1v1h-1zM191 411h1v1h-1zM195 411h1v1h-1zM199 411h1v1h-1zM203 411h1v1h-1zM207 411h1v1h-1zM211 411h1v1h-1zM215 411h1v1h-1zM219 411h1v1h-1zM223 411h1v1h-1zM227 411h1v1h-1zM231 411h1v1h-1zM235 411h1v1h-1zM239 411h1v1h-1zM243 411h1v1h-1zM247 411h1v1h-1zM251 411h1v1h-1zM255 411h1v1h-1zM259 411h1v1h-1zM263 411h1v1h-1zM267 411h1v1h-1zM271 411h1v1h-1zM275 411h1v1h-1zM279 411h1v1h-1zM283 411h1v1h-1zM287 411h1v1h-1zM291 411h1v1h-1zM295 411h1v1h-1zM299 411h1v1h-1zM303 411h1v1h-1zM307 411h1v1h-1zM311 411h1v1h-1zM315 411h1v1h-1zM319 411h1v1h-1zM323 411h1v1h-1zM327 411h1v1h-1zM331 411h1v1h-1zM335 411h1v1h-1zM339 411h1v1h-1zM343 411h1v1h-1zM347 411h1v1h-1zM351 411h1v1h-1zM355 411h1v1h-1zM359 411h1v1h-1zM363 411h1v1h-1zM367 411h1v1h-1zM371 411h1v1h-1zM375 411h1v1h-1zM379 411h1v1h-1zM383 411h1v1h-1zM387 411h1v1h-1zM391 411h1v1h-1zM395 411h1v1h-1zM399 411h1v1h-1zM403 411h1v1h-1zM407 411h1v1h-1zM411 411h1v1h-1zM415 411h1v1h-1zM419 411h1v1h-1zM423 411h1v1h-1zM427 411h1v1h-1zM431 411h1v1h-1zM435 411h1v1h-1zM439 411h1v1h-1zM443 411h1v1h-1zM447 411h1v1h-1zM451 411h1v1h-1zM455 411h1v1h-1zM459 411h1v1h-1zM463 411h1v1h-1zM467 411h1v1h-1zM471 411h1v1h-1zM475 411h1v1h-1zM479 411h1v1h-1zM483 411h1v1h-1zM487 411h1v1h-1zM491 411h1v1h-1zM495 411h1v1h-1zM499 411h1v1h-1zM503 411h1v1h-1zM507 411h1v1h-1zM511 411h1v1h-1zM515 411h1v1h-1zM519 411h1v1h-1zM523 411h1v1h-1zM527 411h1v1h-1zM531 411h1v1h-1zM535 411h1v1h-1zM539 411h1v1h-1zM543 411h1v1h-1zM547 411h1v1h-1zM551 411h1v1h-1zM555 411h1v1h-1zM559 411h1v1h-1zM563 411h1v1h-1zM567 411h1v1h-1zM571 411h1v1h-1zM575 411h1v1h-1zM579 411h1v1h-1zM583 411h1v1h-1zM587 411h1v1h-1zM591 411h1v1h-1zM595 411h1v1h-1zM599 411h1v1h-1zM603 411h1v1h-1zM607 411h1v1h-1zM611 411h1v1h-1z" fill="#fff"/>
<rect x="75" y="421" width="4" height="1" fill="#fff"/>
<rect x="616" y="421" width="4" height="1" fill="#fff"/>
<rect x="75" y="430" width="4" height="1" fill="#fff"/>
<rect x="613" y="430" width="7" height="1" fill="#fff"/>
<path d="M83 430h1v1h-1zM87 430h1v1h-1zM91 430h1v1h-1zM95 430h1v1h-1zM99 430h1v1h-1zM103 430h1v1h-1zM107 430h1v1h-1zM111 430h1v1h-1zM115 430h1v1h-1zM119 430h1v1h-1zM123 430h1v1h-1zM127 430h1v1h-1zM131 430h1v1h-1zM135 430h1v1h-1zM139 430h1v1h-1zM143 430h1v1h-1zM147 430h1v1h-1zM151 430h1v1h-1zM155 430h1v1h-1zM159 430h1v1h-1zM163 430h1v1h-1zM167 430h1v1h-1zM171 430h1v1h-1zM175 430h1v1h-1zM179 430h1v1h-1zM183 430h1v1h-1zM187 430h1v1h-1zM191 430h1v1h-1zM195 430h1v1h-1zM199 430h1v1h-1zM203 430h1v1h-1zM207 430h1v1h-1zM211 430h1v1h-1zM215 430h1v1h-1zM219 430h1v1h-1zM223 430h1v1h-1zM227 430h1v1h-1zM231 430h1v1h-1zM235 430h1v1h-1zM239 430h1v1h-1zM243 430h1v1h-1zM247 430h1v1h-1zM251 430h1v1h-1zM255 430h1v1h-1zM259 430h1v1h-1zM263 430h1v1h-1zM267 430h1v1h-1zM271 430h1v1h-1zM275 430h1v1h-1zM279 430h1v1h-1zM283 430h1v1h-1zM287 430h1v1h-1zM291 430h1v1h-1zM295 430h1v1h-1zM299 430h1v1h-1zM303 430h1v1h-1zM307 430h1v1h-1zM311 430h1v1h-1zM315 430h1v1h-1zM319 430h1v1h-1zM323 430h1v1h-1zM327 430h1v1h-1zM331 430h1v1h-1zM335 430h1v1h-1zM339 430h1v1h-1zM343 430h1v1h-1zM347 430h1v1h-1zM351 430h1v1h-1zM355 430h1v1h-1zM359 430h1v1h-1zM363 430h1v1h-1zM367 430h1v1h-1zM371 430h1v1h-1zM375 430h1v1h-1zM379 430h1v1h-1zM383 430h1v1h-1zM387 430h1v1h-1zM391 430h1v1h-1zM395 430h1v1h-1zM399 430h1v1h-1zM403 430h1v1h-1zM407 430h1v1h-1zM411 430h1v1h-1zM415 430h1v1h-1zM419 430h1v1h-1zM423 430h1v1h-1zM427 430h1v1h-1zM431 430h1v1h-1zM435 430h1v1h-1zM439 430h1v1h-1zM443 430h1v1h-1zM447 430h1v1h-1zM451 430h1v1h-1zM455 430h1v1h-1zM459 430h1v1h-1zM463 430h1v1h-1zM467 430h1v1h-1zM471 430h1v1h-1zM475 430h1v1h-1zM479 430h1v1h-1zM483 430h1v1h-1zM487 430h1v1h-1zM491 430h1v1h-1zM495 430h1v1h-1zM499 430h1v1h-1zM503 430h1v1h-1zM507 430h1v1h-1zM511 430h1v1h-1zM515 430h1v1h-1zM519 430h1v1h-1zM523 430h1v1h-1zM527 430h1v1h-1zM531 430h1v1h-1zM535 430h1v1h-1zM539 430h1v1h-1zM543 430h1v1h-1zM547 430h1v1h-1zM551 430h1v1h-1zM555 430h1v1h-1zM559 430h1v1h-1zM563 430h1v1h-1zM567 430h1v1h-1zM571 430h1v1h-1zM575 430h1v1h-1zM579 430h1v1h-1zM583 430h1v1h-1zM587 430h1v1h-1zM591 430h1v1h-1zM595 430h1v1h-1zM599 430h1v1h-1zM603 430h1v1h-1zM607 430h1v1h-1zM611 430h1v1h-1z" fill="#fff"/>
<rect x="75" y="439" width="4" height="1" fill="#fff"/>
<rect x="616" y="439" width="4" height="1" fill="#fff"/>
<rect x="75" y="449" width="4" height="1" fill="#fff"/>
<rect x="613" y="449" width="7" height="1" fill="#fff"/>
<path d="M83 449h1v1h-1zM87 449h1v1h-1zM91 449h1v1h-1zM95 449h1v1h-1zM99 449h1v1h-1zM103 449h1v1h-1zM107 449h1v1h-1zM111 449h1v1h-1zM115 449h1v1h-1zM119 449h1v1h-1zM123 449h1v1h-1zM127 449h1v1h-1zM131 449h1v1h-1zM135 449h1v1h-1zM139 449h1v1h-1zM143 449h1v1h-1zM147 449h1v1h-1zM151 449h1v1h-1zM155 449h1v1h-1zM159 449h1v1h-1zM163 449h1v1h-1zM167 449h1v1h-1zM171 449h1v1h-1zM175 449h1v1h-1zM179 449h1v1h-1zM183 449h1v1h-1zM187 449h1v1h-1zM191 449h1v1h-1zM195 449h1v1h-1zM199 449h1v1h-1zM203 449h1v1h-1zM207 449h1v1h-1zM211 449h1v1h-1zM215 449h1v1h-1zM219 449h1v1h-1zM223 449h1v1h-1zM227 449h1v1h-1zM231 449h1v1h-1zM235 449h1v1h-1zM239 449h1v1h-1zM243 449h1v1h-1zM247 449h1v1h-1zM251 449h1v1h-1zM255 449h1v1h-1zM259 449h1v1h-1zM263 449h1v1h-1zM267 449h1v1h-1zM271 449h1v1h-1zM275 449h1v1h-1zM279 449h1v1h-1zM283 449h1v1h-1zM287 449h1v1h-1zM291 449h1v1h-1zM295 449h1v1h-1zM299 449h1v1h-1zM303 449h1v1h-1zM307 449h1v1h-1zM311 449h1v1h-1zM315 449h1v1h-1zM319 449h1v1h-1zM323 449h1v1h-1zM327 449h1v1h-1zM331 449h1v1h-1zM335 449h1v1h-1zM339 449h1v1h-1zM343 449h1v1h-1zM347 449h1v1h-1zM351 449h1v1h-1zM355 449h1v1h-1zM359 449h1v1h-1zM363 449h1v1h-1zM367 449h1v1h-1zM371 449h1v1h-1zM375 449h1v1h-1zM379 449h1v1h-1zM383 449h1v1h-1zM387 449h1v1h-1zM391 449h1v1h-1zM395 449h1v1h-1zM399 449h1v1h-1zM403 449h1v1h-1zM407 449h1v1h-1zM411 449h1v1h-1zM415 449h1v1h-1zM419 449h1v1h-1zM423 449h1v1h-1zM427 449h1v1h-1zM431 449h1v1h-1zM435 449h1v1h-1zM439 449h1v1h-1zM443 449h1v1h-1zM447 449h1v1h-1zM451 449h1v1h-1zM455 449h1v1h-1zM459 449h1v1h-1zM463 449h1v1h-1zM467 449h1v1h-1zM471 449h1v1h-1zM475 449h1v1h-1zM479 449h1v1h-1zM483 449h1v1h-1zM487 449h1v1h-1zM491 449h1v1h-1zM495 449h1v1h-1zM499 449h1v1h-1zM503 449h1v1h-1zM507 449h1v1h-1zM511 449h1v1h-1zM515 449h1v1h-1zM519 449h1v1h-1zM523 449h1v1h-1zM527 449h1v1h-1zM531 449h1v1h-1zM535 449h1v1h-1zM539 449h1v1h-1zM543 449h1v1h-1zM547 449h1v1h-1zM551 449h1v1h-1zM555 449h1v1h-1zM559 449h1v1h-1zM563 449h1v1h-1zM567 449h1v1h-1zM571 449h1v1h-1zM575 449h1v1h-1zM579 449h1v1h-1zM583 449h1v1h-1zM587 449h1v1h-1zM591 449h1v1h-1zM595 449h1v1h-1zM599 449h1v1h-1zM603 449h1v1h-1zM607 449h1v1h-1zM611 449h1v1h-1z" fill="#fff"/>
<rect x="75" y="458" width="4" height="1" fill="#fff"/>
<rect x="616" y="458" width="4" height="1" fill="#fff"/>
<rect x="75" y="467" width="4" height="1" fill="#fff"/>
<rect x="613" y="467" width="7" height="1" fill="#fff"/>
<path d="M83 467h1v1h-1zM87 467h1v1h-1zM91 467h1v1h-1zM95 467h1v1h-1zM99 467h1v1h-1zM103 467h1v1h-1zM107 467h1v1h-1zM111 467h1v1h-1zM115 467h1v1h-1zM119 467h1v1h-1zM123 467h1v1h-1zM127 467h1v1h-1zM131 467h1v1h-1zM135 467h1v1h-1zM139 467h1v1h-1zM143 467h1v1h-1zM147 467h1v1h-1zM151 467h1v1h-1zM155 467h1v1h-1zM159 467h1v1h-1zM163 467h1v1h-1zM167 467h1v1h-1zM171 467h1v1h-1zM175 467h1v1h-1zM179 467h1v1h-1zM183 467h1v1h-1zM187 467h1v1h-1zM191 467h1v1h-1zM195 467h1v1h-1zM199 467h1v1h-1zM203 467h1v1h-1zM207 467h1v1h-1zM211 467h1v1h-1zM215 467h1v1h-1zM219 467h1v1h-1zM223 467h1v1h-1zM227 467h1v1h-1zM231 467h1v1h-1zM235 467h1v1h-1zM239 467h1v1h-1zM243 467h1v1h-1zM247 467h1v1h-1zM251 467h1v1h-1zM255 467h1v1h-1zM259 467h1v1h-1zM263 467h1v1h-1zM267 467h1v1h-1zM271 467h1v1h-1zM275 467h1v1h-1zM279 467h1v1h-1zM283 467h1v1h-1zM287 467h1v1h-1zM291 467h1v1h-1zM295 467h1v1h-1zM299 467h1v1h-1zM303 467h1v1h-1zM307 467h1v1h-1zM311 467h1v1h-1zM315 467h1v1h-1zM319 467h1v1h-1zM323 467h1v1h-1zM327 467h1v1h-1zM331 467h1v1h-1zM335 467h1v1h-1zM339 467h1v1h-1zM343 467h1v1h-1zM347 467h1v1h-1zM351 467h1v1h-1zM355 467h1v1h-1zM359 467h1v1h-1zM363 467h1v1h-1zM367 467h1v1h-1zM371 467h1v1h-1zM375 467h1v1h-1zM379 467h1v1h-1zM383 467h1v1h-1zM387 467h1v1h-1zM391 467h1v1h-1zM395 467h1v1h-1zM399 467h1v1h-1zM403 467h1v1h-1zM407 467h1v1h-1zM411 467h1v1h-1zM415 467h1v1h-1zM419 467h1v1h-1zM423 467h1v1h-1zM427 467h1v1h-1zM431 467h1v1h-1zM435 467h1v1h-1zM439 467h1v1h-1zM443 467h1v1h-1zM447 467h1v1h-1zM451 467h1v1h-1zM455 467h1v1h-1zM459 467h1v1h-1zM463 467h1v1h-1zM467 467h1v1h-1zM471 467h1v1h-1zM475 467h1v1h-1zM479 467h1v1h-1zM483 467h1v1h-1zM487 467h1v1h-1zM491 467h1v1h-1zM495 467h1v1h-1zM499 467h1v1h-1zM503 467h1v1h-1zM507 467h1v1h-1zM511 467h1v1h-1zM515 467h1v1h-1zM519 467h1v1h-1zM523 467h1v1h-1zM527 467h1v1h-1zM531 467h1v1h-1zM535 467h1v1h-1zM539 467h1v1h-1zM543 467h1v1h-1zM547 467h1v1h-1zM551 467h1v1h-1zM555 467h1v1h-1zM559 467h1v1h-1zM563 467h1v1h-1zM567 467h1v1h-1zM571 467h1v1h-1zM575 467h1v1h-1zM579 467h1v1h-1zM583 467h1v1h-1zM587 467h1v1h-1zM591 467h1v1h-1zM595 467h1v1h-1zM599 467h1v1h-1zM603 467h1v1h-1zM607 467h1v1h-1zM611 467h1v1h-1z" fill="#fff"/>
<rect x="75" y="476" width="4" height="1" fill="#fff"/>
<rect x="616" y="476" width="4" height="1" fill="#fff"/>
<rect x="75" y="486" width="4" height="1" fill="#fff"/>
<rect x="613" y="486" width="7" height="1" fill="#fff"/>
<path d="M83 486h1v1h-1zM87 486h1v1h-1zM91 486h1v1h-1zM95 486h1v1h-1zM99 486h1v1h-1zM103 486h1v1h-1zM107 486h1v1h-1zM111 486h1v1h-1zM115 486h1v1h-1zM119 486h1v1h-1zM123 486h1v1h-1zM127 486h1v1h-1zM131 486h1v1h-1zM135 486h1v1h-1zM139 486h1v1h-1zM143 486h1v1h-1zM147 486h1v1h-1zM151 486h1v1h-1zM155 486h1v1h-1zM159 486h1v1h-1zM163 486h1v1h-1zM167 486h1v1h-1zM171 486h1v1h-1zM175 486h1v1h-1zM179 486h1v1h-1zM183 486h1v1h-1zM187 486h1v1h-1zM191 486h1v1h-1zM195 486h1v1h-1zM199 486h1v1h-1zM203 486h1v1h-1zM207 486h1v1h-1zM211 486h1v1h-1zM215 486h1v1h-1zM219 486h1v1h-1zM223 486h1v1h-1zM227 486h1v1h-1zM231 486h1v1h-1zM235 486h1v1h-1zM239 486h1v1h-1zM243 486h1v1h-1zM247 486h1v1h-1zM251 486h1v1h-1zM255 486h1v1h-1zM259 486h1v1h-1zM263 486h1v1h-1zM267 486h1v1h-1zM271 486h1v1h-1zM275 486h1v1h-1zM279 486h1v1h-1zM283 486h1v1h-1zM287 486h1v1h-1zM291 486h1v1h-1zM295 486h1v1h-1zM299 486h1v1h-1zM303 486h1v1h-1zM307 486h1v1h-1zM311 486h1v1h-1zM315 486h1v1h-1zM319 486h1v1h-1zM323 486h1v1h-1zM327 486h1v1h-1zM331 486h1v1h-1zM335 486h1v1h-1zM339 486h1v1h-1zM343 486h1v1h-1zM347 486h1v1h-1zM351 486h1v1h-1zM355 486h1v1h-1zM359 486h1v1h-1zM363 486h1v1h-1zM367 486h1v1h-1zM371 486h1v1h-1zM375 486h1v1h-1zM379 486h1v1h-1zM383 486h1v1h-1zM387 486h1v1h-1zM391 486h1v1h-1zM395 486h1v1h-1zM399 486h1v1h-1zM403 486h1v1h-1zM407 486h1v1h-1zM411 486h1v1h-1zM415 486h1v1h-1zM419 486h1v1h-1zM423 486h1v1h-1zM427 486h1v1h-1zM431 486h1v1h-1zM435 486h1v1h-1zM439 486h1v1h-1zM443 486h1v1h-1zM447 486h1v1h-1zM451 486h1v1h-1zM455 486h1v1h-1zM459 486h1v1h-1zM463 486h1v1h-1zM467 486h1v1h-1zM471 486h1v1h-1zM475 486h1v1h-1zM479 486h1v1h-1zM483 486h1v1h-1zM487 486h1v1h-1zM491 486h1v1h-1zM495 486h1v1h-1zM499 486h1v1h-1zM503 486h1v1h-1zM507 486h1v1h-1zM511 486h1v1h-1zM515 486h1v1h-1zM519 486h1v1h-1zM523 486h1v1h-1zM527 486h1v1h-1zM531 486h1v1h-1zM535 486h1v1h-1zM539 486h1v1h-1zM543 486h1v1h-1zM547 486h1v1h-1zM551 486h1v1h-1zM555 486h1v1h-1zM559 486h1v1h-1zM563 486h1v1h-1zM567 486h1v1h-1zM571 486h1v1h-1zM575 486h1v1h-1zM579 486h1v1h-1zM583 486h1v1h-1zM587 486h1v1h-1zM591 486h1v1h-1zM595 486h1v1h-1zM599 486h1v1h-1zM603 486h1v1h-1zM607 486h1v1h-1zM611 486h1v1h-1z" fill="#fff"/>
<rect x="75" y="495" width="4" height="1" fill="#fff"/>
<rect x="616" y="495" width="4" height="1" fill="#fff"/>
<rect x="75" y="504" width="4" height="1" fill="#fff"/>
<rect x="613" y="504" width="7" height="1" fill="#fff"/>
<path d="M83 504h1v1h-1zM87 504h1v1h-1zM91 504h1v1h-1zM95 504h1v1h-1zM99 504h1v1h-1zM103 504h1v1h-1zM107 504h1v1h-1zM111 504h1v1h-1zM115 504h1v1h-1zM119 504h1v1h-1zM123 504h1v1h-1zM127 504h1v1h-1zM131 504h1v1h-1zM135 504h1v1h-1zM139 504h1v1h-1zM143 504h1v1h-1zM147 504h1v1h-1zM151 504h1v1h-1zM155 504h1v1h-1zM159 504h1v1h-1zM163 504h1v1h-1zM167 504h1v1h-1zM171 504h1v1h-1zM175 504h1v1h-1zM179 504h1v1h-1zM183 504h1v1h-1zM187 504h1v1h-1zM191 504h1v1h-1zM195 504h1v1h-1zM199 504h1v1h-1zM203 504h1v1h-1zM207 504h1v1h-1zM211 504h1v1h-1zM215 504h1v1h-1zM219 504h1v1h-1zM223 504h1v1h-1zM227 504h1v1h-1zM231 504h1v1h-1zM235 504h1v1h-1zM239 504h1v1h-1zM243 504h1v1h-1zM247 504h1v1h-1zM251 504h1v1h-1zM255 504h1v1h-1zM259 504h1v1h-1zM263 504h1v1h-1zM267 504h1v1h-1zM271 504h1v1h-1zM275 504h1v1h-1zM279 504h1v1h-1zM283 504h1v1h-1zM287 504h1v1h-1zM291 504h1v1h-1zM295 504h1v1h-1zM299 504h1v1h-1zM303 504h1v1h-1zM307 504h1v1h-1zM311 504h1v1h-1zM315 504h1v1h-1zM319 504h1v1h-1zM323 504h1v1h-1zM327 504h1v1h-1zM331 504h1v1h-1zM335 504h1v1h-1zM339 504h1v1h-1zM343 504h1v1h-1zM347 504h1v1h-1zM351 504h1v1h-1zM355 504h1v1h-1zM359 504h1v1h-1zM363 504h1v1h-1zM367 504h1v1h-1zM371 504h1v1h-1zM375 504h1v1h-1zM379 504h1v1h-1zM383 504h1v1h-1zM387 504h1v1h-1zM391 504h1v1h-1zM395 504h1v1h-1zM399 504h1v1h-1zM403 504h1v1h-1zM407 504h1v1h-1zM411 504h1v1h-1zM415 504h1v1h-1zM419 504h1v1h-1zM423 504h1v1h-1zM427 504h1v1h-1zM431 504h1v1h-1zM435 504h1v1h-1zM439 504h1v1h-1zM443 504h1v1h-1zM447 504h1v1h-1zM451 504h1v1h-1zM455 504h1v1h-1zM459 504h1v1h-1zM463 504h1v1h-1zM467 504h1v1h-1zM471 504h1v1h-1zM475 504h1v1h-1zM479 504h1v1h-1zM483 504h1v1h-1zM487 504h1v1h-1zM491 504h1v1h-1zM495 504h1v1h-1zM499 504h1v1h-1zM503 504h1v1h-1zM507 504h1v1h-1zM511 504h1v1h-1zM515 504h1v1h-1zM519 504h1v1h-1zM523 504h1v1h-1zM527 504h1v1h-1zM531 504h1v1h-1zM535 504h1v1h-1zM539 504h1v1h-1zM543 504h1v1h-1zM547 504h1v1h-1zM551 504h1v1h-1zM555 504h1v1h-1zM559 504h1v1h-1zM563 504h1v1h-1zM567 504h1v1h-1zM571 504h1v1h-1zM575 504h1v1h-1zM579 504h1v1h-1zM583 504h1v1h-1zM587 504h1v1h-1zM591 504h1v1h-1zM595 504h1v1h-1zM599 504h1v1h-1zM603 504h1v1h-1zM607 504h1v1h-1zM611 504h1v1h-1z" fill="#fff"/>
<rect x="75" y="514" width="4" height="1" fill="#fff"/>
<rect x="616" y="514" width="4" height="1" fill="#fff"/>
<rect x="75" y="523" width="4" height="1" fill="#fff"/>
<rect x="613" y="523" width="7" height="1" fill="#fff"/>
<path d="M83 523h1v1h-1zM87 523h1v1h-1zM91 523h1v1h-1zM95 523h1v1h-1zM99 523h1v1h-1zM103 523h1v1h-1zM107 523h1v1h-1zM111 523h1v1h-1zM115 523h1v1h-1zM119 523h1v1h-1zM123 523h1v1h-1zM127 523h1v1h-1zM131 523h1v1h-1zM135 523h1v1h-1zM139 523h1v1h-1zM143 523h1v1h-1zM147 523h1v1h-1zM151 523h1v1h-1zM155 523h1v1h-1zM159 523h1v1h-1zM163 523h1v1h-1zM167 523h1v1h-1zM171 523h1v1h-1zM175 523h1v1h-1zM179 523h1v1h-1zM183 523h1v1h-1zM187 523h1v1h-1zM191 523h1v1h-1zM195 523h1v1h-1zM199 523h1v1h-1zM203 523h1v1h-1zM207 523h1v1h-1zM211 523h1v1h-1zM215 523h1v1h-1zM219 523h1v1h-1zM223 523h1v1h-1zM227 523h1v1h-1zM231 523h1v1h-1zM235 523h1v1h-1zM239 523h1v1h-1zM243 523h1v1h-1zM247 523h1v1h-1zM251 523h1v1h-1zM255 523h1v1h-1zM259 523h1v1h-1zM263 523h1v1h-1zM267 523h1v1h-1zM271 523h1v1h-1zM275 523h1v1h-1zM279 523h1v1h-1zM283 523h1v1h-1zM287 523h1v1h-1zM291 523h1v1h-1zM295 523h1v1h-1zM299 523h1v1h-1zM303 523h1v1h-1zM307 523h1v1h-1zM311 523h1v1h-1zM315 523h1v1h-1zM319 523h1v1h-1zM323 523h1v1h-1zM327 523h1v1h-1zM331 523h1v1h-1zM335 523h1v1h-1zM339 523h1v1h-1zM343 523h1v1h-1zM347 523h1v1h-1zM351 523h1v1h-1zM355 523h1v1h-1zM359 523h1v1h-1zM363 523h1v1h-1zM367 523h1v1h-1zM371 523h1v1h-1zM375 523h1v1h-1zM379 523h1v1h-1zM383 523h1v1h-1zM387 523h1v1h-1zM391 523h1v1h-1zM395 523h1v1h-1zM399 523h1v1h-1zM403 523h1v1h-1zM407 523h1v1h-1zM411 523h1v1h-1zM415 523h1v1h-1zM419 523h1v1h-1zM423 523h1v1h-1zM427 523h1v1h-1zM431 523h1v1h-1zM435 523h1v1h-1zM439 523h1v1h-1zM443 523h1v1h-1zM447 523h1v1h-1zM451 523h1v1h-1zM455 523h1v1h-1zM459 523h1v1h-1zM463 523h1v1h-1zM467 523h1v1h-1zM471 523h1v1h-1zM475 523h1v1h-1zM479 523h1v1h-1zM483 523h1v1h-1zM487 523h1v1h-1zM491 523h1v1h-1zM495 523h1v1h-1zM499 523h1v1h-1zM503 523h1v1h-1zM507 523h1v1h-1zM511 523h1v1h-1zM515 523h1v1h-1zM519 523h1v1h-1zM523 523h1v1h-1zM527 523h1v1h-1zM531 523h1v1h-1zM535 523h1v1h-1zM539 523h1v1h-1zM543 523h1v1h-1zM547 523h1v1h-1zM551 523h1v1h-1zM555 523h1v1h-1zM559 523h1v1h-1zM563 523h1v1h-1zM567 523h1v1h-1zM571 523h1v1h-1zM575 523h1v1h-1zM579 523h1v1h-1zM583 523h1v1h-1zM587 523h1v1h-1zM591 523h1v1h-1zM595 523h1v1h-1zM599 523h1v1h-1zM603 523h1v1h-1zM607 523h1v1h-1zM611 523h1v1h-1z" fill="#fff"/>
<rect x="75" y="532" width="4" height="1" fill="#fff"/>
<rect x="616" y="532" width="4" height="1" fill="#fff"/>
<rect x="75" y="382" width="544" height="1" fill="#00aaff"/>
<rect x="76" y="411" width="543" height="1" fill="#ff8c00"/>
<rect x="75" y="420" width="544" height="1" fill="#4cb400"/>
<rect x="76" y="439" width="543" height="1" fill="#00aaff"/>
<rect x="76" y="458" width="543" height="1" fill="#999999"/>
<rect x="76" y="458" width="3" height="1" fill="#ff8c00"/>
<rect x="91" y="458" width="18" height="1" fill="#ff8c00"/>
<rect x="123" y="458" width="15" height="1" fill="#ff8c00"/>
<rect x="150" y="458" width="18" height="1" fill="#ff8c00"/>
<rect x="178" y="458" width="13" height="1" fill="#ff8c00"/>
<rect x="203" y="458" width="12" height="1" fill="#ff8c00"/>
<rect x="227" y="458" width="12" height="1" fill="#ff8c00"/>
<rect x="250" y="458" width="12" height="1" fill="#ff8c00"/>
<rect x="273" y="458" width="15" height="1" fill="#ff8c00"/>
<rect x="301" y="458" width="13" height="1" fill="#ff8c00"/>
<rect x="326" y="458" width="15" height="1" fill="#ff8c00"/>
<rect x="79" y="458" width="1" height="1" fill="#000"/>
<rect x="122" y="458" width="1" height="1" fill="#000"/>
<rect x="215" y="458" width="1" height="1" fill="#000"/>
<rect x="248" y="458" width="2" height="1" fill="#000"/>
<rect x="266" y="458" width="2" height="1" fill="#000"/>
<rect x="300" y="458" width="1" height="1" fill="#000"/>
<rect x="314" y="458" width="2" height="1" fill="#000"/>
<rect x="325" y="458" width="1" height="1" fill="#000"/>
<rect x="355" y="458" width="24" height="1" fill="#ff8c00"/>
<rect x="399" y="458" width="27" height="1" fill="#ff8c00"/>
<rect x="457" y="458" width="40" height="1" fill="#ff8c00"/>
<rect x="499" y="458" width="4" height="1" fill="#ff8c00"/>
<rect x="529" y="458" width="10" height="1" fill="#ff8c00"/>
<rect x="352" y="458" width="3" height="1" fill="#000"/>
<rect x="388" y="458" width="2" height="1" fill="#000"/>
<rect x="396" y="458" width="3" height="1" fill="#000"/>
<rect x="441" y="458" width="1" height="1" fill="#000"/>
<rect x="497" y="458" width="2" height="1" fill="#000"/>
<rect x="75" y="486" width="544" height="3" fill="#ff00ff"/>
<rect x="75" y="502" width="544" height="1" fill="#ff0000"/>
<rect x="76" y="510" width="543" height="1" fill="#999999"/>
<rect x="141" y="510" width="40" height="1" fill="#000"/>
<rect x="141" y="511" width="40" height="1" fill="#999999"/>
<rect x="320" y="510" width="8" height="1" fill="#000"/>
<rect x="320" y="511" width="8" height="1" fill="#999999"/>
<rect x="340" y="510" width="11" height="1" fill="#000"/>
<rect x="340" y="511" width="11" height="1" fill="#999999"/>
<rect x="354" y="510" width="7" height="1" fill="#000"/>
<rect x="354" y="511" width="7" height="1" fill="#999999"/>
<rect x="511" y="510" width="40" height="1" fill="#000"/>
<rect x="511" y="511" width="40" height="1" fill="#999999"/>
<rect x="76" y="532" width="543" height="1" fill="#4cb400"/>
<rect x="257" y="369" width="1" height="1" fill="#ff00ff"/>
<rect x="269" y="369" width="1" height="1" fill="#ff00ff"/>
<rect x="290" y="369" width="4" height="1" fill="#ff00ff"/>
<rect x="298" y="369" width="1" height="1" fill="#ff00ff"/>
<rect x="305" y="369" width="4" height="1" fill="#ff00ff"/>
<rect x="315" y="369" width="4" height="1" fill="#ff00ff"/>
<rect x="327" y="369" width="1" height="1" fill="#ff00ff"/>
<rect x="366" y="369" width="1" height="1" fill="#ff00ff"/>
<rect x="387" y="369" width="3" height="1" fill="#ff00ff"/>
<rect x="395" y="369" width="2" height="1" fill="#ff00ff"/>
<rect x="496" y="369" width="1" height="1" fill="#ff00ff"/>
<rect x="75" y="367" width="1" height="1" fill="#ff00ff"/>
<rect x="621" y="357" width="3" height="9" fill="#4cb400"/>
<rect x="621" y="366" width="3" height="9" fill="#ff00ff"/>
<rect x="621" y="375" width="3" height="9" fill="#00aaff"/>
<rect x="621" y="384" width="3" height="10" fill="#ff0000"/>
<rect x="621" y="394" width="3" height="9" fill="#999999"/>
<rect x="621" y="403" width="3" height="9" fill="#ff8c00"/>
<rect x="621" y="412" width="3" height="10" fill="#4cb400"/>
<rect x="621" y="422" width="3" height="9" fill="#ff00ff"/>
<rect x="621" y="431" width="3" height="9" fill="#00aaff"/>
<rect x="621" y="440" width="3" height="10" fill="#ff0000"/>
<rect x="621" y="450" width="3" height="9" fill="#999999"/>
<rect x="621" y="459" width="3" height="9" fill="#ff8c00"/>
<rect x="621" y="468" width="3" height="9" fill="#4cb400"/>
<rect x="621" y="477" width="3" height="10" fill="#ff00ff"/>
<rect x="621" y="487" width="3" height="9" fill="#00aaff"/>
<rect x="621" y="496" width="3" height="9" fill="#ff0000"/>
<rect x="621" y="505" width="3" height="10" fill="#999999"/>
<rect x="621" y="515" width="3" height="9" fill="#ff8c00"/>
<rect x="621" y="524" width="3" height="9" fill="#4cb400"/>
<rect x="621" y="533" width="3" height="9" fill="#ff00ff"/>
</g>
<text x="628.2" y="369.0" font-size="12.5">Spin/P_CK</text>
<text x="628.2" y="387.5" font-size="12.5">-X_toSaturn</text>
<text x="628.2" y="406.0" font-size="12.5">-Y_toSaturn</text>
<text x="628.2" y="424.5" font-size="12.5">-Z_toSaturn</text>
<text x="628.2" y="443.0" font-size="12.5">-X_toSun</text>
<text x="628.2" y="461.5" font-size="12.5">-Y_toSun</text>
<text x="628.2" y="480.0" font-size="12.5">-Z_toSun</text>
<text x="628.2" y="498.5" font-size="12.5">-X_toNEP</text>
<text x="628.2" y="517.0" font-size="12.5">-Y_toNEP</text>
<text x="628.2" y="535.5" font-size="12.5">-Z_toNEP</text>
<text x="62" y="377.7" font-size="10.6" text-anchor="middle">180°</text>
<text x="62" y="396.2" font-size="10.6" text-anchor="middle">0°</text>
<text x="62" y="526.2" font-size="10.6" text-anchor="middle">100°</text>
<text x="62" y="544.2" font-size="10.6" text-anchor="middle">0°</text>
<text x="296" y="20.3" font-size="15.3" textLength="160" lengthAdjust="spacingAndGlyphs">INCA H TOF Channels</text>
<text x="218.8" y="37.6" font-size="10.8" textLength="313" lengthAdjust="spacingAndGlyphs">2014-323T00:00:00.000 - 2014-323T23:59:00.000 MIMI/APL</text>
<text transform="translate(21.9,156) rotate(-90) scale(1,1.16)" font-size="12.4" font-weight="bold" text-anchor="middle">Log Cnts</text>
<text transform="translate(37.3,157.5) rotate(-90) scale(1,1.14)" font-size="12.4" text-anchor="middle">(cm<tspan font-size="7.5" dy="-5">2</tspan><tspan dy="5">-sr-s-keV)</tspan><tspan font-size="7.5" dy="-5">-1</tspan></text>
<text transform="translate(39.1,308.2) rotate(-90) scale(1,1.2)" font-size="10.6" text-anchor="middle">INCA Mode</text>
<text transform="translate(38.2,449.4) rotate(-90) scale(1,1.18)" font-size="12.6" text-anchor="middle">Cassini Attitude</text>
<text x="75.5" y="565.6" font-size="12.4" text-anchor="middle">00:00</text>
<text x="211.5" y="565.6" font-size="12.4" text-anchor="middle">06:00</text>
<text x="347.5" y="565.6" font-size="12.4" text-anchor="middle">12:00</text>
<text x="483.5" y="565.6" font-size="12.4" text-anchor="middle">18:00</text>
<text x="75.5" y="596.8" font-size="12.4" text-anchor="middle">71.98</text>
<text x="211.5" y="596.8" font-size="12.4" text-anchor="middle">71.77</text>
<text x="347.5" y="596.8" font-size="12.4" text-anchor="middle">71.57</text>
<text x="483.5" y="596.8" font-size="12.4" text-anchor="middle">71.36</text>
<text x="75.5" y="612.6" font-size="12.4" text-anchor="middle">33.06</text>
<text x="211.5" y="612.6" font-size="12.4" text-anchor="middle">33.05</text>
<text x="347.5" y="612.6" font-size="12.4" text-anchor="middle">33.05</text>
<text x="483.5" y="612.6" font-size="12.4" text-anchor="middle">33.03</text>
<text x="75.5" y="628.4" font-size="12.4" text-anchor="middle">0538</text>
<text x="211.5" y="628.4" font-size="12.4" text-anchor="middle">0540</text>
<text x="347.5" y="628.4" font-size="12.4" text-anchor="middle">0542</text>
<text x="483.5" y="628.4" font-size="12.4" text-anchor="middle">0544</text>
<text x="8" y="573.7" font-size="12.4">UTC</text>
<text x="8" y="604.5" font-size="12.4">R</text>
<text x="17.3" y="613.7" font-size="12.4">satur</text>
<text x="8" y="620.6" font-size="12.4">Lat</text>
<text x="8" y="635.6" font-size="12.4">LT</text>
<text x="8" y="651.5" font-size="12.4">L</text>
<text x="15.2" y="660.2" font-size="12.4">saturn</text>
<text x="318.7" y="687.9" font-size="10.8">Background Subtracted</text>
<text x="569.2" y="687.9" font-size="10.8">in Stare Mode</text>
</svg></body></html>
